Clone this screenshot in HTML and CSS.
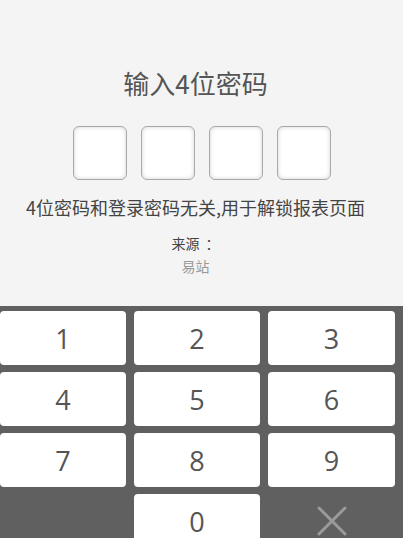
FILE: index.html
```html
<!DOCTYPE html>
<html lang="zh">
<head>
<meta charset="utf-8">
<title>输入4位密码</title>
<link rel="stylesheet" href="styles.css">
</head>
<body>
<div class="page">
  <div class="top">
    <h1 class="title">输入4位密码</h1>
    <div class="boxes">
      <div class="box"></div>
      <div class="box"></div>
      <div class="box"></div>
      <div class="box"></div>
    </div>
    <p class="hint">4位密码和登录密码无关,用于解锁报表页面</p>
    <p class="src-label">来源<span class="colon">：</span></p>
    <p class="src-name">易站</p>
  </div>
  <div class="keypad">
    <button class="key">1</button>
    <button class="key">2</button>
    <button class="key">3</button>
    <button class="key">4</button>
    <button class="key">5</button>
    <button class="key">6</button>
    <button class="key">7</button>
    <button class="key">8</button>
    <button class="key">9</button>
    <div class="blank"></div>
    <button class="key">0</button>
    <button class="del" aria-label="删除">
      <svg width="30" height="30" viewBox="0 0 30 30"><path d="M2 2 L28 28 M28 2 L2 28" stroke="#9a9a9a" stroke-width="3" stroke-linecap="round" fill="none"/></svg>
    </button>
  </div>
</div>
</body>
</html>
```
FILE: styles.css
```css
html, body {
  margin: 0;
  padding: 0;
  height: 100%;
  overflow: hidden;
}
body {
  background: #f4f4f4;
  font-family: "Open Sans", "Noto Sans CJK SC", sans-serif;
  color: #555;
}
.page {
  display: flex;
  flex-direction: column;
}
.top {
  height: 306px;
  box-sizing: border-box;
  padding-top: 68px;
  display: flex;
  flex-direction: column;
  align-items: center;
}
.title {
  margin: 0;
  padding-right: 12px;
  font-size: 26px;
  line-height: 30px;
  font-weight: normal;
  color: #555;
  font-family: "Noto Sans CJK SC", sans-serif;
}
.boxes {
  margin-top: 28px;
  display: flex;
  gap: 14px;
  padding-left: 1px;
}
.box {
  width: 52px;
  height: 52px;
  border: 1px solid #a8a8a8;
  border-radius: 6px;
  background: #fff;
  box-shadow: inset 0 0 4px rgba(0,0,0,0.18);
}
.hint {
  margin: 15px 0 0;
  padding-right: 12px;
  font-size: 18px;
  line-height: 24px;
  color: #444;
  font-family: "Noto Sans CJK SC", sans-serif;
}
.src-label {
  margin: 14px 0 0;
  padding-right: 12px;
  font-size: 14px;
  line-height: 20px;
  color: #444;
  font-family: "Noto Sans CJK SC", sans-serif;
}
.colon {
  padding-left: 6px;
}
.src-name {
  margin: 3px 0 0;
  padding-right: 12px;
  font-size: 14px;
  line-height: 20px;
  color: #999;
  font-family: "Noto Sans CJK SC", sans-serif;
}
.keypad {
  background: #606060;
  padding: 5px 8px 20px 0;
  display: grid;
  grid-template-columns: 126px 126px 127px;
  column-gap: 8px;
  row-gap: 7px;
  grid-auto-rows: 54px;
}
.key {
  border: none;
  margin: 0;
  padding: 0;
  background: #fff;
  border-radius: 4px;
  font-family: "Open Sans", sans-serif;
  font-size: 27px;
  color: #555;
  display: flex;
  align-items: center;
  justify-content: center;
}
.blank {
  background: transparent;
}
.del {
  border: none;
  margin: 0;
  padding: 0;
  background: transparent;
  display: flex;
  align-items: center;
  justify-content: center;
}
```
